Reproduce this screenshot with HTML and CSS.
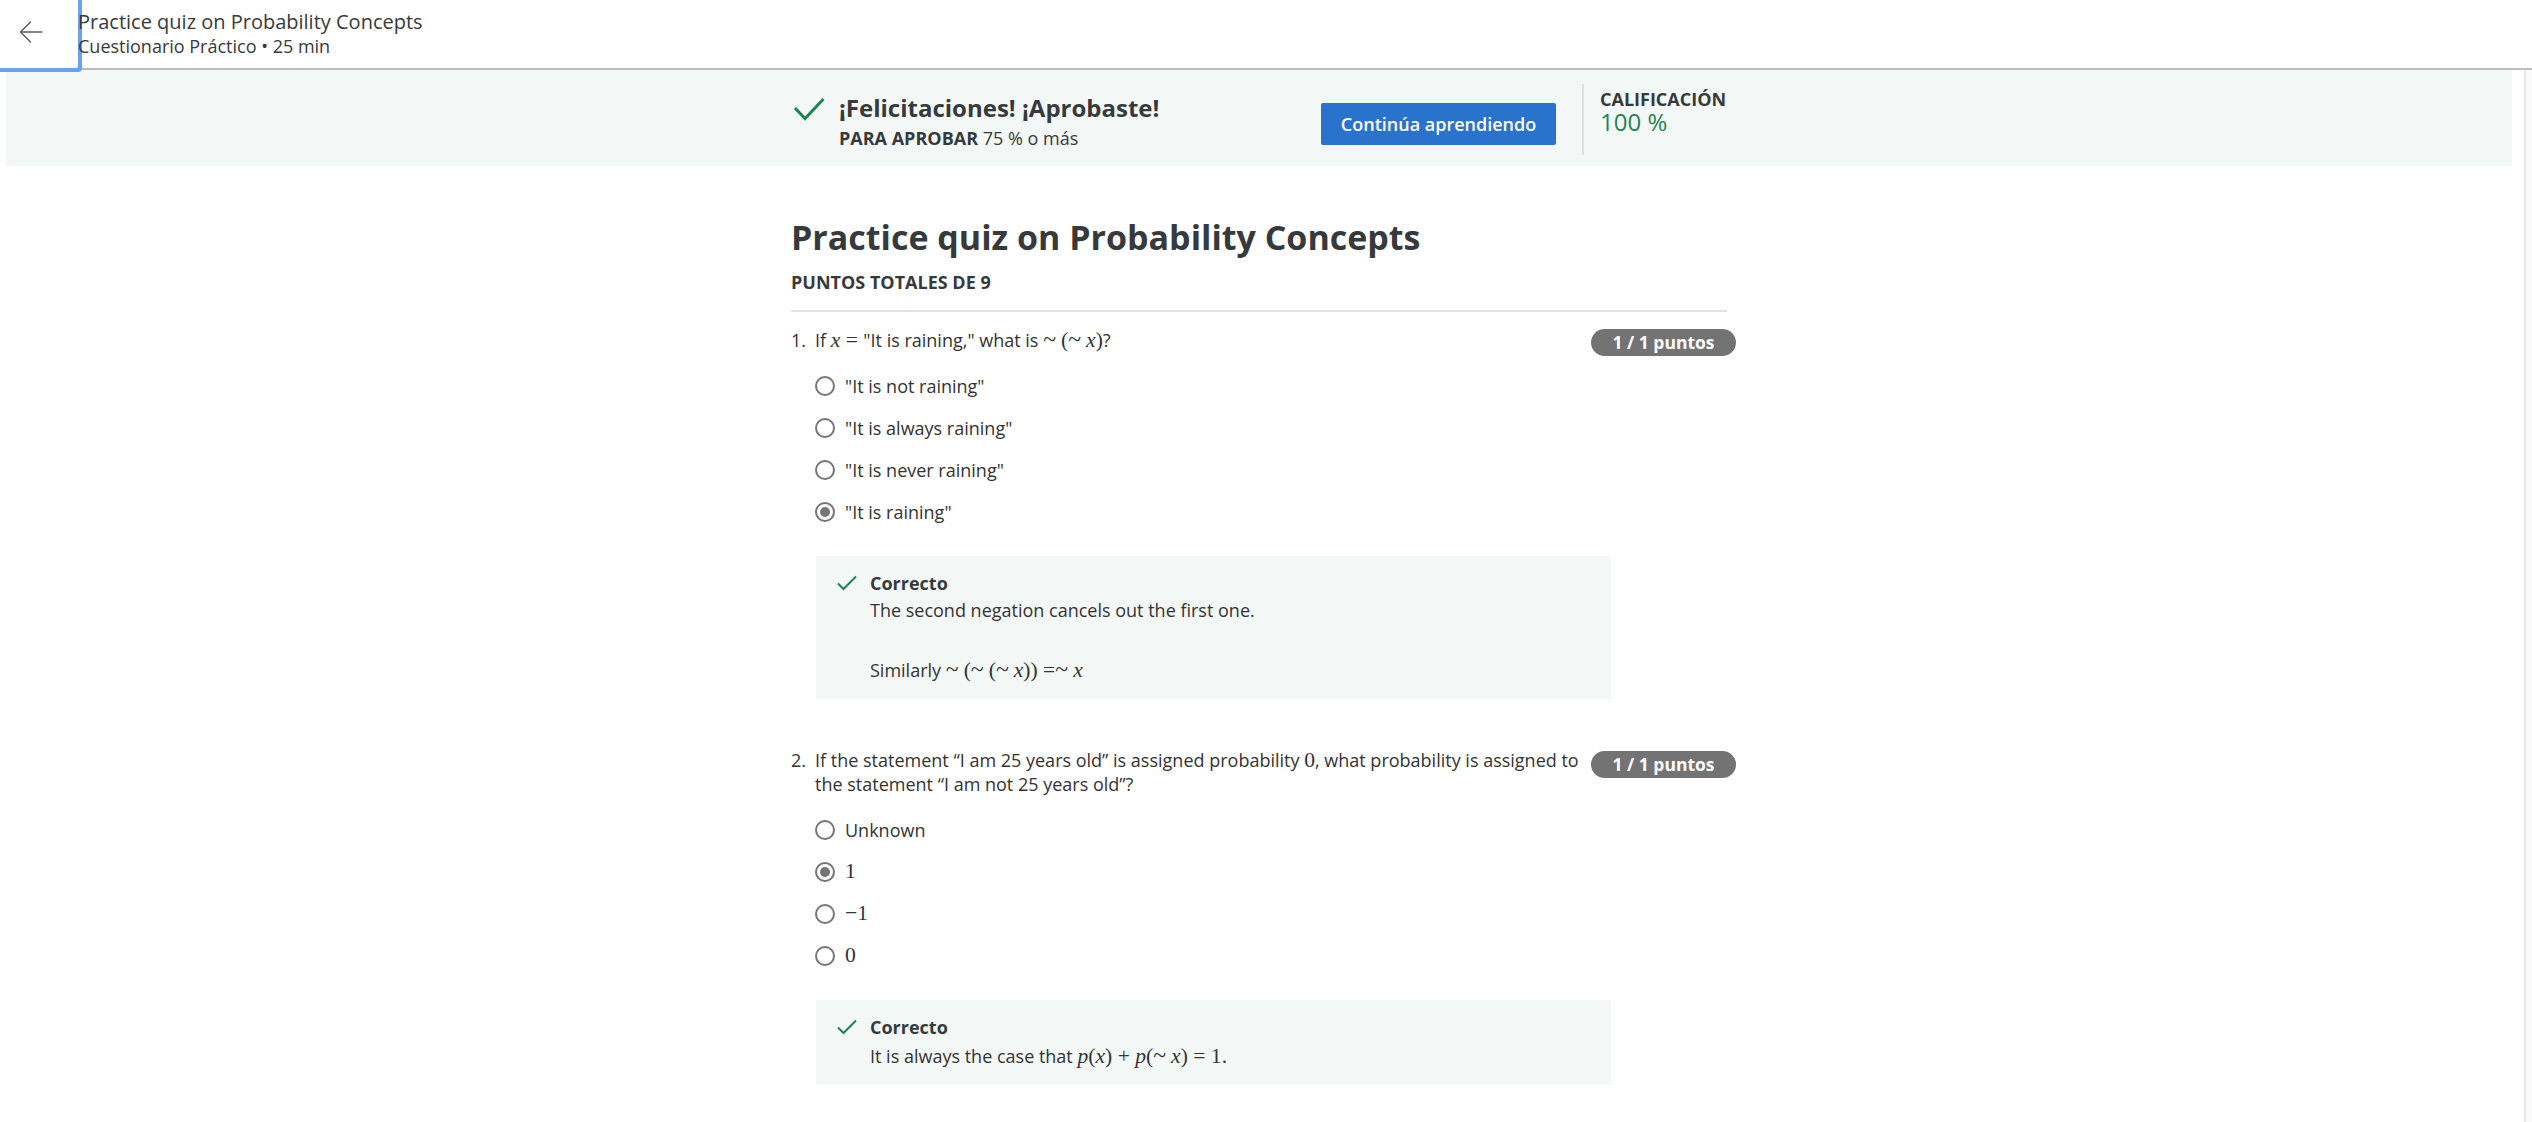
FILE: index.html
```html
<!DOCTYPE html>
<html lang="es">
<head>
<meta charset="utf-8">
<title>Practice quiz on Probability Concepts</title>
<link rel="stylesheet" href="styles.css">
</head>
<body>
<header class="topbar">
  <button class="back" aria-label="Volver">
    <svg width="24" height="24" viewBox="0 0 24 24" fill="none" stroke="#5b5b5b" stroke-width="1.4" stroke-linecap="round" stroke-linejoin="round"><path d="M23 12H1.5M11.5 2L1.5 12l10 10"/></svg>
  </button>
  <div class="titles">
    <div class="titles__main">Practice quiz on Probability Concepts</div>
    <div class="titles__sub">Cuestionario Práctico • 25 min</div>
  </div>
</header>

<div class="viewport">
  <main class="main">
    <section class="banner">
      <div class="banner__inner">
        <div class="banner__status">
          <svg class="banner__check" width="34" height="32" viewBox="0 0 34 32" fill="none" stroke="#1f8354" stroke-width="3"><polyline points="4,16 14,26.5 32.5,7"/></svg>
          <div>
            <div class="banner__title">¡Felicitaciones! ¡Aprobaste!</div>
            <div class="banner__pass"><strong>PARA APROBAR</strong> 75 % o más</div>
          </div>
        </div>
        <button class="btn-primary">Continúa aprendiendo</button>
        <div class="banner__divider"></div>
        <div class="grade">
          <div class="grade__label">CALIFICACIÓN</div>
          <div class="grade__value">100 %</div>
        </div>
      </div>
    </section>

    <div class="quiz">
      <h1 class="quiz__title">Practice quiz on Probability Concepts</h1>
      <div class="quiz__total">PUNTOS TOTALES DE 9</div>
      <hr class="quiz__rule">

      <div class="question">
        <div class="question__row">
          <span class="question__num">1.</span>
          <div class="question__text">If <span class="math"><i>x</i> = </span>"It is raining," what is <span class="math"><span class="rel">~</span>(<span class="rel">~</span><i>x</i>)</span>?</div>
          <span class="badge">1 / 1 puntos</span>
        </div>
        <ul class="options">
          <li class="option"><span class="radio"></span>"It is not raining"</li>
          <li class="option"><span class="radio"></span>"It is always raining"</li>
          <li class="option"><span class="radio"></span>"It is never raining"</li>
          <li class="option"><span class="radio radio--checked"></span>"It is raining"</li>
        </ul>
        <div class="feedback">
          <svg class="feedback__icon" width="20" height="24" viewBox="0 0 20 24" fill="none" stroke="#1f8354" stroke-width="2"><polyline points="1,12.5 6.5,18 19,5.5"/></svg>
          <div class="feedback__body">
            <div class="feedback__title">Correcto</div>
            <p class="feedback__text">The second negation cancels out the first one.</p>
            <p class="feedback__text feedback__text--math feedback__text--spaced">Similarly <span class="math"><span class="rel">~</span>(<span class="rel">~</span>(<span class="rel">~</span><i>x</i>)) =<span class="rel">~</span><i>x</i></span></p>
          </div>
        </div>
      </div>

      <div class="question">
        <div class="question__row">
          <span class="question__num">2.</span>
          <div class="question__text">If the statement “I am 25 years old” is assigned probability <span class="math">0</span>, what probability is assigned to the statement “I am not 25 years old”?</div>
          <span class="badge">1 / 1 puntos</span>
        </div>
        <ul class="options">
          <li class="option"><span class="radio"></span>Unknown</li>
          <li class="option"><span class="radio radio--checked"></span><span class="math">1</span></li>
          <li class="option"><span class="radio"></span><span class="math">−1</span></li>
          <li class="option"><span class="radio"></span><span class="math">0</span></li>
        </ul>
        <div class="feedback">
          <svg class="feedback__icon" width="20" height="24" viewBox="0 0 20 24" fill="none" stroke="#1f8354" stroke-width="2"><polyline points="1,12.5 6.5,18 19,5.5"/></svg>
          <div class="feedback__body">
            <div class="feedback__title">Correcto</div>
            <p class="feedback__text feedback__text--math">It is always the case that <span class="math"><i>p</i>(<i>x</i>) + <i>p</i>(<span class="rel">~</span><i>x</i>) = 1.</span></p>
          </div>
        </div>
      </div>
    </div>
  </main>
  <div class="scrolltrack"></div>
</div>
</body>
</html>
```

FILE: styles.css
```css
* { box-sizing: border-box; }

html, body {
  margin: 0;
  height: 100%;
  overflow: hidden;
}

body {
  font-family: "Open Sans", "Liberation Sans", sans-serif;
  color: #333333;
  background: #ffffff;
}

/* ---------- top bar ---------- */
.topbar {
  position: relative;
  z-index: 2;
  display: flex;
  height: 70px;
  border-bottom: 2px solid #bdbdbd;
  background: #ffffff;
}

.back {
  flex: none;
  width: 78px;
  height: 68px;
  padding: 0;
  border: 0;
  border-radius: 0 0 2px 0;
  background: #ffffff;
  display: flex;
  align-items: center;
  justify-content: center;
  box-shadow: 2px 2px 0 2px #6ca1ee;
}

.back svg { margin-left: -16px; margin-top: -4px; }

.titles {
  padding-top: 10px;
  color: #373a3c;
}

.titles__main {
  font-size: 20px;
  line-height: 24px;
}

.titles__sub {
  font-size: 18px;
  line-height: 24px;
}

/* ---------- viewport ---------- */
.viewport {
  display: flex;
  height: calc(100% - 70px);
}

.main {
  flex: 1;
  padding: 0 12px 0 6px;
  overflow: hidden;
}

.scrolltrack {
  flex: none;
  width: 8px;
  background: #fafafa;
  border-left: 2px solid #e6e6e6;
}

/* ---------- banner ---------- */
.banner {
  height: 96px;
  background: #f3f8f7;
  display: flex;
  justify-content: center;
}

.banner__inner {
  width: 936px;
  display: flex;
  align-items: flex-start;
}

.banner__status {
  flex: 1;
  display: flex;
  align-items: flex-start;
  padding-top: 23px;
}

.banner__check { flex: none; margin-top: -1px; }

.banner__status > div { margin-left: 14px; }

.banner__title {
  font-size: 24px;
  line-height: 30px;
  font-weight: 700;
  color: #373a3c;
}

.banner__pass {
  margin-top: 3px;
  font-size: 18px;
  line-height: 24px;
  color: #373a3c;
}

.btn-primary {
  flex: none;
  width: 235px;
  height: 42px;
  margin-top: 33px;
  border: 0;
  border-radius: 2px;
  background: #2a73cc;
  color: #ffffff;
  font-family: "Open Sans", "Liberation Sans", sans-serif;
  font-size: 18px;
  font-weight: 600;
}

.banner__divider {
  flex: none;
  width: 2px;
  height: 71px;
  margin: 14px 16px 0 26px;
  background: #e0e0e0;
}

.grade {
  flex: none;
  width: 127px;
  padding-top: 19px;
}

.grade__label {
  font-size: 18px;
  line-height: 20px;
  font-weight: 700;
  color: #373a3c;
}

.grade__value {
  font-size: 24px;
  line-height: 25px;
  color: #1f8354;
}

/* ---------- quiz ---------- */
.quiz {
  width: 936px;
  margin: 0 auto;
  padding-top: 49px;
}

.quiz__title {
  margin: 0;
  font-size: 34px;
  line-height: 44px;
  font-weight: 700;
  color: #373a3c;
}

.quiz__total {
  margin-top: 11px;
  font-size: 18px;
  line-height: 24px;
  font-weight: 700;
  color: #373a3c;
}

.quiz__rule {
  margin: 16px 0 0;
  border: 0;
  height: 2px;
  background: #e1e1e1;
}

.question {
  padding-top: 16px;
}

.question + .question { padding-top: 49px; }

.question__row {
  display: flex;
  align-items: flex-start;
  margin-right: -9px;
}

.question__num {
  flex: none;
  width: 24px;
  font-size: 18px;
  line-height: 24px;
}

.question__text {
  flex: 1;
  font-size: 18px;
  line-height: 24px;
}

.badge {
  flex: none;
  width: 145px;
  height: 27px;
  margin: 1px 0 -4px 4px;
  border-radius: 14px;
  background: #737373;
  color: #ffffff;
  font-size: 17.5px;
  line-height: 27px;
  font-weight: 700;
  text-align: center;
}

.question + .question .badge { margin-top: 3px; }

.options {
  list-style: none;
  margin: 13px 0 0;
  padding: 0 0 0 24px;
}

.option {
  display: flex;
  align-items: center;
  height: 42px;
  font-size: 18px;
}

.radio {
  flex: none;
  width: 20px;
  height: 20px;
  margin-right: 10px;
  border: 2px solid #757575;
  border-radius: 50%;
  display: flex;
  align-items: center;
  justify-content: center;
}

.radio--checked::after {
  content: "";
  width: 10px;
  height: 10px;
  border-radius: 50%;
  background: #757575;
}

.math {
  font-family: "Liberation Serif", "DejaVu Serif", serif;
  font-size: 1.2em;
  line-height: 1;
}

.rel {
  margin-right: 5px;
  font-size: 1.1em;
}

.feedback {
  display: flex;
  align-items: flex-start;
  width: 795px;
  margin: 23px 0 0 25px;
  padding: 15px 20px 15px 21px;
  background: #f3f8f7;
}

.feedback__icon { flex: none; margin-right: 13px; }

.feedback__title {
  font-size: 18px;
  line-height: 24px;
  font-weight: 700;
  color: #373a3c;
}

.feedback__text {
  margin: 3px 0 0;
  font-size: 18px;
  line-height: 24px;
}

.feedback__text--math { line-height: 28px; }

.feedback__text--spaced { margin-top: 34px; }
```
